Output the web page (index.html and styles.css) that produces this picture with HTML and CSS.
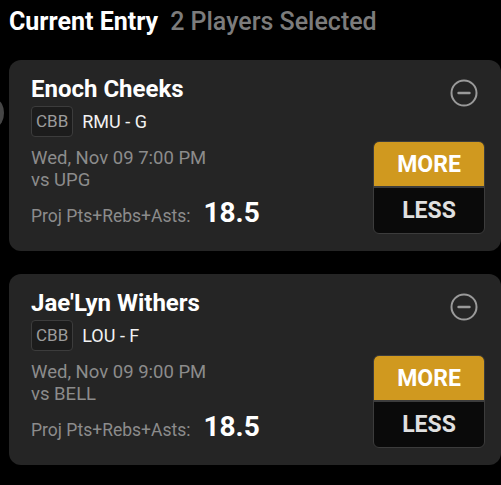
FILE: index.html
```html
<!DOCTYPE html>
<html>
<head>
<meta charset="utf-8">
<link rel="stylesheet" href="styles.css">
</head>
<body>
<div class="page">
  <div class="edge-dot"></div>
  <h1 class="header"><span class="title">Current Entry</span><span class="sub">2 Players Selected</span></h1>
  <div class="card">
    <div class="info">
      <div class="name">Enoch Cheeks</div>
      <div class="team-row"><span class="badge">CBB</span><span class="team">RMU - G</span></div>
      <div class="game">Wed, Nov 09 7:00 PM<br>vs UPG</div>
      <div class="proj"><span class="proj-label">Proj Pts+Rebs+Asts:</span><span class="proj-val">18.5</span></div>
    </div>
    <div class="side">
      <svg class="remove" width="28" height="28" viewBox="0 0 28 28"><circle cx="14" cy="14" r="12.5" fill="none" stroke="#9a9a9a" stroke-width="2"/><line x1="8.5" y1="14" x2="19.5" y2="14" stroke="#9a9a9a" stroke-width="2.4" stroke-linecap="round"/></svg>
      <div class="picks"><div class="more">MORE</div><div class="less">LESS</div></div>
    </div>
  </div>
  <div class="card">
    <div class="info">
      <div class="name">Jae'Lyn Withers</div>
      <div class="team-row"><span class="badge">CBB</span><span class="team">LOU - F</span></div>
      <div class="game">Wed, Nov 09 9:00 PM<br>vs BELL</div>
      <div class="proj"><span class="proj-label">Proj Pts+Rebs+Asts:</span><span class="proj-val">18.5</span></div>
    </div>
    <div class="side">
      <svg class="remove" width="28" height="28" viewBox="0 0 28 28"><circle cx="14" cy="14" r="12.5" fill="none" stroke="#9a9a9a" stroke-width="2"/><line x1="8.5" y1="14" x2="19.5" y2="14" stroke="#9a9a9a" stroke-width="2.4" stroke-linecap="round"/></svg>
      <div class="picks"><div class="more">MORE</div><div class="less">LESS</div></div>
    </div>
  </div>
</div>
</body>
</html>
```
FILE: styles.css
```css
* { box-sizing: border-box; }
html, body { margin: 0; padding: 0; background: #000; }
body { font-family: Roboto, "Liberation Sans", sans-serif; color: #fff; width: 501px; height: 485px; overflow: hidden; }
.page { position: relative; padding: 0 0 0 9px; }
.edge-dot { position: absolute; left: -11px; top: 100px; width: 15px; height: 26px; border-radius: 50%; background: #464646; }
.header { margin: 0; height: 60px; padding-top: 7px; font-size: 25px; line-height: 30px; font-weight: 700; white-space: nowrap; }
.title { color: #fff; }
.sub { color: #7c7c7c; font-weight: 500; margin-left: 12px; }
.card { position: relative; display: flex; justify-content: space-between; background: #252525; border-radius: 12px; height: 191px; margin-bottom: 23px; padding: 15px 16px 0 22px; }
.info { display: flex; flex-direction: column; }
.name { font-size: 24px; line-height: 28px; font-weight: 700; }
.team-row { display: flex; align-items: center; margin-top: 3px; }
.badge { display: inline-block; border: 1px solid #3c3c3c; background: #1c1c1c; border-radius: 4px; color: #9c9c9c; font-size: 17px; line-height: 29px; padding: 0 4px; }
.team { font-size: 18px; margin-left: 9px; color: #f2f2f2; }
.game { margin-top: 10px; font-size: 18.5px; line-height: 22px; color: #8c8c8c; }
.proj { display: flex; align-items: baseline; margin-top: 5px; }
.proj-label { font-size: 17.5px; color: #8c8c8c; }
.proj-val { font-size: 28px; font-weight: 700; margin-left: 13px; }
.side { display: flex; flex-direction: column; align-items: flex-end; }
.remove { display: block; margin-top: 4px; margin-right: 7px; }
.picks { margin-top: 34px; width: 112px; border: 1px solid #3c3c3c; border-radius: 6px; overflow: hidden; background: #0a0a0a; }
.more { height: 46px; background: #d0991f; color: #fff; font-size: 23px; font-weight: 700; text-align: center; line-height: 46px; border-bottom: 2px solid #3c3c3c; }
.less { height: 45px; color: #e0e0e0; font-size: 23px; font-weight: 700; text-align: center; line-height: 45px; }
```
